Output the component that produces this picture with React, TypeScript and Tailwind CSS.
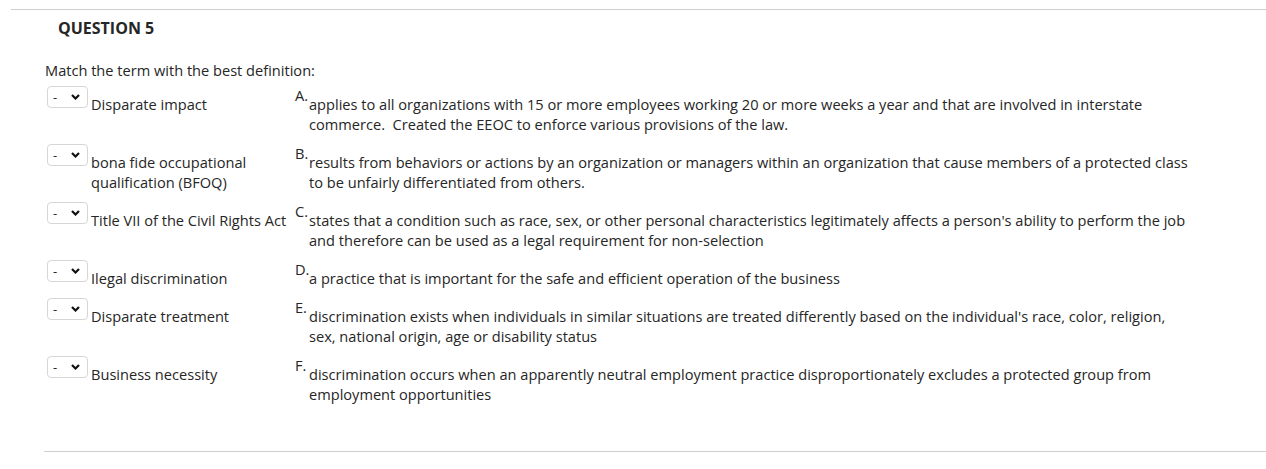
const rows = [
  {
    term: 'Disparate impact',
    letter: 'A.',
    def: 'applies to all organizations with 15 or more employees working 20 or more weeks a year and that are involved in interstate commerce.\u00a0 Created the EEOC to enforce various provisions of the law.',
  },
  {
    term: 'bona fide occupational qualification (BFOQ)',
    letter: 'B.',
    def: 'results from behaviors or actions by an organization or managers within an organization that cause members of a protected class to be unfairly differentiated from others.',
  },
  {
    term: 'Title VII of the Civil Rights Act',
    letter: 'C.',
    def: "states that a condition such as race, sex, or other personal characteristics legitimately affects a person's ability to perform the job and therefore can be used as a legal requirement for non-selection",
  },
  {
    term: 'Ilegal discrimination',
    letter: 'D.',
    def: 'a practice that is important for the safe and efficient operation of the business',
  },
  {
    term: 'Disparate treatment',
    letter: 'E.',
    def: "discrimination exists when individuals in similar situations are treated differently based on the individual's race, color, religion, sex, national origin, age or disability status",
  },
  {
    term: 'Business necessity',
    letter: 'F.',
    def: 'discrimination occurs when an apparently neutral employment practice disproportionately excludes a protected group from employment opportunities',
  },
]

const Dropdown = () => (
  <div className="ml-[2px] flex h-[22px] w-[41px] shrink-0 items-center justify-between rounded-[4px] border border-[#d6d6d6] bg-white pl-[5px] pr-[7px]">
    <span className="text-[13px] leading-none">-</span>
    <svg width="9" height="6" viewBox="0 0 9 6" fill="none">
      <path d="M1 1l3.5 3.5L8 1" stroke="#111" strokeWidth="2.2" />
    </svg>
  </div>
)

export default function App() {
  return (
    <div className="w-[1266px] h-[469px] bg-white pt-[9px] text-[#262626] font-['Open_Sans',sans-serif]">
      <div className="ml-[11px] border-t border-[#cfcfcf]" />
      <div className="pl-[58px] pt-[6px] text-[16px] font-bold leading-[24px]">QUESTION 5</div>
      <div className="pl-[45px] pt-[20px]">
        <div className="text-[14.6px] leading-[20px]">Match the term with the best definition:</div>
        <div className="mt-[6px] text-[14.6px] leading-[20px]">
          {rows.map((r) => (
            <div key={r.letter} className="mb-[10px] flex items-start">
              <Dropdown />
              <div className="ml-[3px] mt-[8px] w-[204px] shrink-0 pr-[6px]">{r.term}</div>
              <div className="-mt-[1px] w-[14px] shrink-0 leading-[20px]">{r.letter}</div>
              <div className="mt-[8px] w-[884px]">{r.def}</div>
            </div>
          ))}
        </div>
      </div>
      <div className="ml-[44px] mt-[47px] border-t border-[#cfcfcf]" />
    </div>
  )
}
